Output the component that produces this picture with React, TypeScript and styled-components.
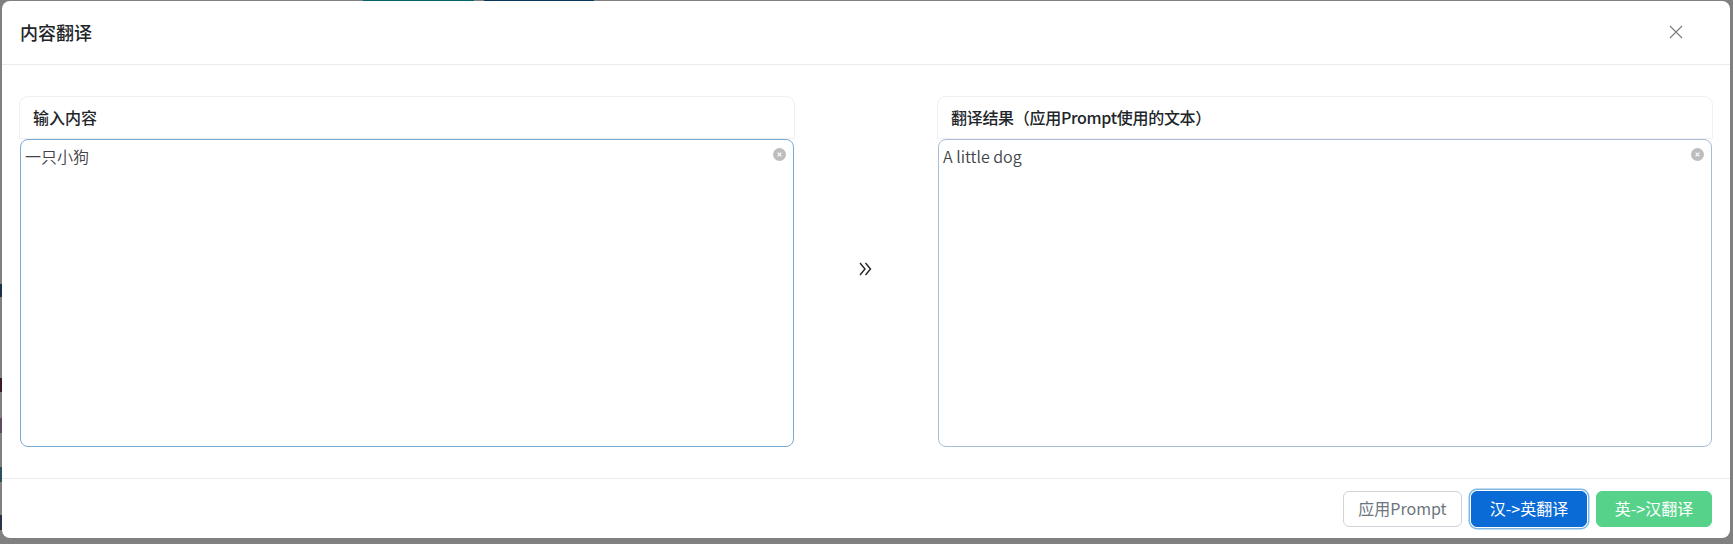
import React from "react";
import styled, { createGlobalStyle } from "styled-components";

const Global = createGlobalStyle`
  html, body { margin: 0; padding: 0; height: 544px; overflow: hidden; background: #808080; }
  #root { height: 544px; }
  * { box-sizing: border-box; }
`;

const font = `"Noto Sans CJK SC", "Open Sans", sans-serif`;

const Backdrop = styled.div`
  position: relative;
  width: 1733px;
  height: 544px;
  padding: 1px 3px 6px 2px;
  background: #808080;
  font-family: ${font};
`;

const Strip = styled.div<{ $left: number; $top: number; $width: number; $height: number; $color: string }>`
  position: absolute;
  top: ${(p) => p.$top}px;
  left: ${(p) => p.$left}px;
  width: ${(p) => p.$width}px;
  height: ${(p) => p.$height}px;
  background: ${(p) => p.$color};
`;

const Modal = styled.div`
  position: relative;
  height: 537px;
  display: flex;
  flex-direction: column;
  background: #fff;
  border-radius: 8px;
`;

const Header = styled.header`
  height: 64px;
  flex: none;
  display: flex;
  align-items: center;
  justify-content: space-between;
  padding: 0 47px 2px 18px;
  border-bottom: 1px solid #e9ecef;
`;

const Title = styled.h5`
  margin: 0;
  font-size: 18px;
  font-weight: 500;
  line-height: 24px;
  color: #212529;
`;

const CloseButton = styled.button`
  width: 14px;
  height: 14px;
  padding: 0;
  border: 0;
  background: none;
  color: #7a7a7a;
  display: flex;
`;

const Body = styled.main`
  flex: 1;
  display: grid;
  grid-template-columns: 776px 1fr 776px;
  padding: 31px 17px 31px 17px;
  align-items: stretch;
  min-height: 0;
`;

const Panel = styled.section`
  display: flex;
  flex-direction: column;
  min-height: 0;
`;

const PanelHeader = styled.div<{ $tight?: boolean }>`
  height: 43px;
  flex: none;
  padding: 8px 13px 0;
  font-size: 16px;
  font-weight: 500;
  line-height: 24px;
  letter-spacing: ${(p) => (p.$tight ? "-0.3px" : "0")};
  color: #212529;
  background: #fff;
  border: 1px solid #f0f0f0;
  border-radius: 9px 9px 0 0;
`;

const Field = styled.div`
  position: relative;
  flex: 1;
  margin: 0 1px;
`;

const TextBox = styled.textarea<{ $tone: string }>`
  display: block;
  width: 100%;
  height: 100%;
  margin: 0;
  padding: 4px 4px;
  resize: none;
  outline: none;
  font-family: ${font};
  font-size: 16px;
  font-weight: 350;
  line-height: 24px;
  color: #3f4449;
  background: #fff;
  border: 1px solid ${(p) => p.$tone};
  border-radius: 8px;
`;

const ClearIcon = styled.svg`
  position: absolute;
  top: 9px;
  right: 8px;
  width: 13px;
  height: 13px;
`;

const Middle = styled.div`
  display: flex;
  align-items: center;
  justify-content: center;
  padding: 0 1px 5px 0;
  color: #212529;
`;

const Footer = styled.footer`
  height: 60px;
  flex: none;
  display: flex;
  align-items: center;
  justify-content: flex-end;
  gap: 9px;
  padding: 0 18px 0 0;
  border-top: 1px solid #e9ecef;
`;

const Button = styled.button<{ $bg: string; $fg: string; $line: string; $w: number; $ring?: boolean }>`
  width: ${(p) => p.$w}px;
  height: 36px;
  padding: 0 0 1px;
  font-family: ${font};
  font-size: 16px;
  font-weight: 400;
  color: ${(p) => p.$fg};
  background: ${(p) => p.$bg};
  border: 1px solid ${(p) => p.$line};
  border-radius: 6px;
  box-shadow: ${(p) => (p.$ring ? "0 0 0 1px #fff, 0 0 0 2.5px #7fb8e6" : "none")};
`;

const Clear = () => (
  <ClearIcon viewBox="0 0 13 13" aria-hidden="true">
    <circle cx="6.5" cy="6.5" r="6.5" fill="#bdbdbd" />
    <path d="M4.6 4.6l3.8 3.8M8.4 4.6l-3.8 3.8" stroke="#fff" strokeWidth="1.1" fill="none" />
  </ClearIcon>
);

export default function App() {
  return (
    <>
      <Global />
      <Backdrop>
        <Strip $left={363} $top={0} $width={111} $height={1} $color="#03636b" />
        <Strip $left={484} $top={0} $width={110} $height={1} $color="#053a5c" />
        <Strip $left={0} $top={284} $width={2} $height={13} $color="#1c2f4d" />
        <Strip $left={0} $top={378} $width={2} $height={14} $color="#3c1a2a" />
        <Strip $left={0} $top={418} $width={2} $height={15} $color="#5f4a5e" />
        <Strip $left={0} $top={467} $width={2} $height={15} $color="#2f4f5c" />
        <Strip $left={0} $top={515} $width={2} $height={15} $color="#2a3348" />
        <Modal>
          <Header>
            <Title>内容翻译</Title>
            <CloseButton aria-label="关闭">
              <svg width="14" height="14" viewBox="0 0 14 14" fill="none" stroke="currentColor" strokeWidth="1.1">
                <path d="M1 1l12 12M13 1L1 13" />
              </svg>
            </CloseButton>
          </Header>
          <Body>
            <Panel>
              <PanelHeader>输入内容</PanelHeader>
              <Field>
                <TextBox $tone="#7ba9d6" readOnly value="一只小狗" />
                <Clear />
              </Field>
            </Panel>
            <Middle>
              <svg width="13" height="14" viewBox="0 0 13 14" fill="none" stroke="currentColor" strokeWidth="1.4">
                <path d="M1 1l5 6-5 6M6.5 1l5 6-5 6" />
              </svg>
            </Middle>
            <Panel>
              <PanelHeader $tight>翻译结果（应用Prompt使用的文本）</PanelHeader>
              <Field>
                <TextBox $tone="#a8bdd6" readOnly value="A little dog" />
                <Clear />
              </Field>
            </Panel>
          </Body>
          <Footer>
            <Button $w={119} $bg="#fff" $fg="#6c757d" $line="#ced4da">应用Prompt</Button>
            <Button $w={116} $bg="#0b6bd6" $fg="#fff" $line="#0b6bd6" $ring>汉-&gt;英翻译</Button>
            <Button $w={116} $bg="#56d28b" $fg="#fff" $line="#56d28b">英-&gt;汉翻译</Button>
          </Footer>
        </Modal>
      </Backdrop>
    </>
  );
}
